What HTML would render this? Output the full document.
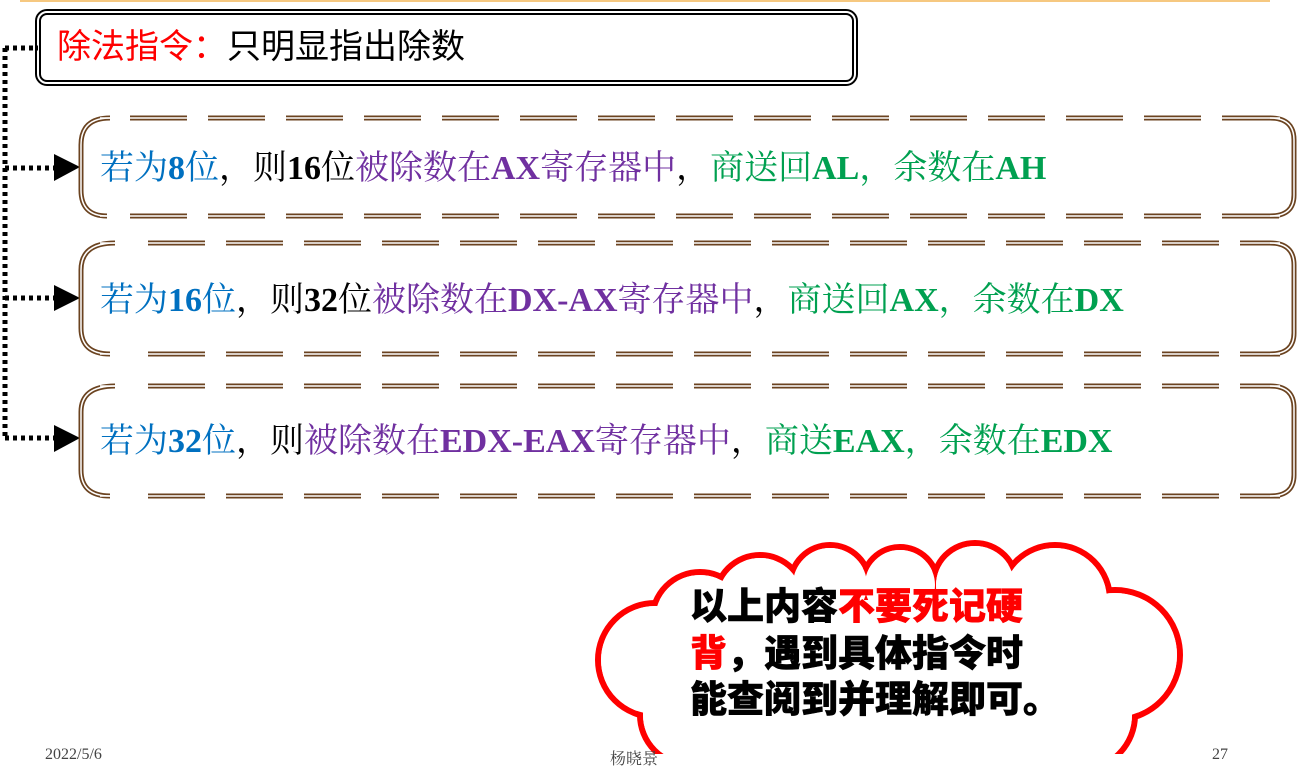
<!DOCTYPE html>
<html><head><meta charset="utf-8"><style>
body{margin:0;width:1305px;height:754px;background:#fff;position:relative;overflow:hidden;font-family:"Liberation Serif","Noto Serif CJK SC",serif}
.t{position:absolute;font-size:34px;white-space:nowrap;line-height:1}
.bl{color:#0070C0}.pu{color:#7030A0}.gr{color:#00A050}.k{color:#000}
.cl{position:absolute;left:690px;font-family:"Liberation Sans","Noto Sans CJK SC",sans-serif;font-weight:900;font-size:37px;line-height:1;white-space:nowrap;letter-spacing:0px;-webkit-text-stroke:0.6px currentColor}
.ft{position:absolute;top:746px;font-size:16px;color:#444}
</style></head><body>
<svg width="1305" height="754" style="position:absolute;left:0;top:0">
<line x1="20" y1="1" x2="1270" y2="1" stroke="#F6C880" stroke-width="2"/>
<rect x="38" y="12" width="817" height="71" rx="9" fill="none" stroke="#000" stroke-width="6"/>
<rect x="38" y="12" width="817" height="71" rx="9" fill="none" stroke="#fff" stroke-width="2"/>
<g fill="none" stroke-dasharray="4 4" stroke="#000" stroke-width="5">
<line x1="5" y1="48" x2="38" y2="48"/>
<line x1="5" y1="48" x2="5" y2="440"/>
<line x1="5" y1="168" x2="55" y2="168"/>
<line x1="5" y1="298" x2="55" y2="298"/>
<line x1="5" y1="438" x2="55" y2="438"/>
</g>
<polygon points="54,154 80,167 54,181" fill="#000"/>
<polygon points="54,285 80,298 54,311" fill="#000"/>
<polygon points="54,425 80,438 54,452" fill="#000"/>
<g fill="none">
<g stroke="#6B4320" stroke-width="5">
<line x1="130" y1="118" x2="1270" y2="118" stroke-dasharray="57 21"/>
<line x1="130" y1="216" x2="1280" y2="216" stroke-dasharray="57 21"/>
<path d="M110,118 Q81,118 81,145 L81,190 Q81,216 107,216"/>
<path d="M1270,118 Q1294,118 1294,140 L1294,195 Q1294,216 1270,216"/>
<line x1="148" y1="243" x2="1270" y2="243" stroke-dasharray="57 21"/>
<line x1="148" y1="354" x2="1280" y2="354" stroke-dasharray="57 21"/>
<path d="M115,243 Q81,243 81,270 L81,328 Q81,354 110,354"/>
<path d="M1270,243 Q1294,243 1294,265 L1294,333 Q1294,354 1270,354"/>
<line x1="148" y1="386" x2="1270" y2="386" stroke-dasharray="57 21"/>
<line x1="148" y1="496" x2="1280" y2="496" stroke-dasharray="57 21"/>
<path d="M115,386 Q81,386 81,412 L81,470 Q81,496 110,496"/>
<path d="M1270,386 Q1294,386 1294,408 L1294,475 Q1294,496 1270,496"/>
</g>
<g stroke="#fff" stroke-width="1.5">
<line x1="100" y1="118" x2="1280" y2="118"/><line x1="100" y1="216" x2="1280" y2="216"/>
<path d="M110,118 Q81,118 81,145 L81,190 Q81,216 107,216"/>
<path d="M1270,118 Q1294,118 1294,140 L1294,195 Q1294,216 1270,216"/>
<line x1="100" y1="243" x2="1280" y2="243"/><line x1="100" y1="354" x2="1280" y2="354"/>
<path d="M115,243 Q81,243 81,270 L81,328 Q81,354 110,354"/>
<path d="M1270,243 Q1294,243 1294,265 L1294,333 Q1294,354 1270,354"/>
<line x1="100" y1="386" x2="1280" y2="386"/><line x1="100" y1="496" x2="1280" y2="496"/>
<path d="M115,386 Q81,386 81,412 L81,470 Q81,496 110,496"/>
<path d="M1270,386 Q1294,386 1294,408 L1294,475 Q1294,496 1270,496"/>
</g>
</g>
<g stroke="#f00" stroke-width="6" fill="#fff">
<circle cx="700" cy="620" r="48"/><circle cx="760" cy="600" r="45"/><circle cx="830" cy="585" r="40"/><circle cx="900" cy="585" r="38"/><circle cx="975" cy="585" r="42"/><circle cx="1055" cy="600" r="55"/><circle cx="1115" cy="655" r="65"/><circle cx="1080" cy="715" r="55"/><circle cx="655" cy="660" r="57"/><circle cx="690" cy="715" r="50"/><circle cx="780" cy="740" r="55"/><circle cx="900" cy="745" r="60"/><circle cx="1000" cy="740" r="55"/>
</g>
<g fill="#fff">
<circle cx="700" cy="620" r="45"/><circle cx="760" cy="600" r="42"/><circle cx="830" cy="585" r="37"/><circle cx="900" cy="585" r="35"/><circle cx="975" cy="585" r="39"/><circle cx="1055" cy="600" r="52"/><circle cx="1115" cy="655" r="62"/><circle cx="1080" cy="715" r="52"/><circle cx="655" cy="660" r="54"/><circle cx="690" cy="715" r="47"/><circle cx="780" cy="740" r="52"/><circle cx="900" cy="745" r="57"/><circle cx="1000" cy="740" r="52"/>
<rect x="700" y="600" width="400" height="154"/>
</g>
</svg>
<div class="t" style="left:57px;top:30px;font-family:'Liberation Sans','Noto Sans CJK SC',sans-serif;font-size:34px"><span style="color:#f00">除法指令：</span>只明显指出除数</div>
<div class="t" style="left:100px;top:152px"><span class="bl">若为<b>8</b>位</span>，则<b>16</b>位<span class="pu">被除数在<b>AX</b>寄存器中</span>，<span class="gr">商送回<b>AL</b>，余数在<b>AH</b></span></div>
<div class="t" style="left:100px;top:284px"><span class="bl">若为<b>16</b>位</span>，则<b>32</b>位<span class="pu">被除数在<b>DX-AX</b>寄存器中</span>，<span class="gr">商送回<b>AX</b>，余数在<b>DX</b></span></div>
<div class="t" style="left:100px;top:425px"><span class="bl">若为<b>32</b>位</span>，则<span class="pu">被除数在<b>EDX-EAX</b>寄存器中</span>，<span class="gr">商送<b>EAX</b>，余数在<b>EDX</b></span></div>
<div class="cl" style="top:588px">以上内容<span style="color:#f00">不要死记硬</span></div>
<div class="cl" style="top:635px"><span style="color:#f00">背</span>，遇到具体指令时</div>
<div class="cl" style="top:681px">能查阅到并理解即可。</div>
<div class="ft" style="left:45px">2022/5/6</div>
<div class="ft" style="left:610px">杨晓景</div>
<div class="ft" style="left:1212px">27</div>
</body></html>
